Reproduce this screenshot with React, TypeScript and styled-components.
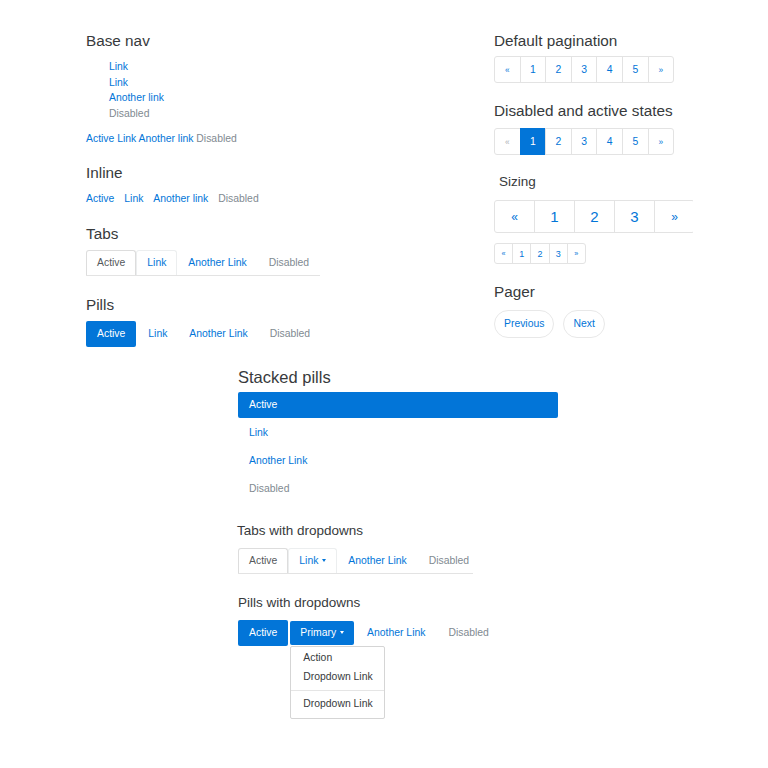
import React from 'react';
import styled, { createGlobalStyle } from 'styled-components';

const BLUE = '#0275d8';
const TEXT = '#373a3c';
const MUTED = '#818a91';
const LINE = '#e3e3e3';

const GlobalStyle = createGlobalStyle`
  html, body {
    margin: 0;
    padding: 0;
    background: #fff;
    font-family: 'Liberation Sans', Arial, sans-serif;
    color: ${TEXT};
  }
  * { box-sizing: border-box; }
`;

type Tone = 'link' | 'muted' | 'dark';

const toneColor = (t?: Tone) => (t === 'muted' ? MUTED : t === 'dark' ? '#55595c' : BLUE);

function App() {
  return (
    <>
      <GlobalStyle />
      <Styled.Page>
        <Styled.TopGrid>
          <Styled.Column>
            <Styled.Title>Base nav</Styled.Title>
            <Styled.BaseList>
              <Styled.Item>Link</Styled.Item>
              <Styled.Item>Link</Styled.Item>
              <Styled.Item>Another link</Styled.Item>
              <Styled.Item $tone="muted">Disabled</Styled.Item>
            </Styled.BaseList>
            <Styled.PlainNav>
              <Styled.Item>Active</Styled.Item> <Styled.Item>Link</Styled.Item>{' '}
              <Styled.Item>Another link</Styled.Item> <Styled.Item $tone="muted">Disabled</Styled.Item>
            </Styled.PlainNav>

            <Styled.Title $top={17} $bottom={9}>
              Inline
            </Styled.Title>
            <Styled.InlineNav>
              <Styled.Item>Active</Styled.Item>
              <Styled.Item>Link</Styled.Item>
              <Styled.Item>Another link</Styled.Item>
              <Styled.Item $tone="muted">Disabled</Styled.Item>
            </Styled.InlineNav>

            <Styled.Title $top={18} $bottom={7}>
              Tabs
            </Styled.Title>
            <Styled.Tabs>
              <Styled.Tab $state="active">Active</Styled.Tab>
              <Styled.Tab $state="hover">Link</Styled.Tab>
              <Styled.Tab>Another Link</Styled.Tab>
              <Styled.Tab $state="disabled">Disabled</Styled.Tab>
            </Styled.Tabs>

            <Styled.Title $top={20} $bottom={7}>
              Pills
            </Styled.Title>
            <Styled.Pills>
              <Styled.Pill $active $pad={11}>Active</Styled.Pill>
              <Styled.Pill>Link</Styled.Pill>
              <Styled.Pill>Another Link</Styled.Pill>
              <Styled.Pill $tone="muted">Disabled</Styled.Pill>
            </Styled.Pills>
          </Styled.Column>

          <Styled.Column $clip>
            <Styled.Title $bottom={6}>Default pagination</Styled.Title>
            <Styled.Pagination>
              {['«', '1', '2', '3', '4', '5', '»'].map((p) => (
                <Styled.PageCell key={p} $small={p === '«' || p === '»'}>
                  {p}
                </Styled.PageCell>
              ))}
            </Styled.Pagination>

            <Styled.Title $top={19} $bottom={8}>
              Disabled and active states
            </Styled.Title>
            <Styled.Pagination>
              {['«', '1', '2', '3', '4', '5', '»'].map((p, i) => (
                <Styled.PageCell
                  key={p}
                  $small={p === '«' || p === '»'}
                  $active={i === 1}
                  $disabled={i === 0}
                >
                  {p}
                </Styled.PageCell>
              ))}
            </Styled.Pagination>

            <Styled.Title $size={13.5} $top={19} $bottom={10} $indent={5}>
              Sizing
            </Styled.Title>
            <Styled.Pagination $size="lg">
              {['«', '1', '2', '3', '»'].map((p) => (
                <Styled.PageCell key={p} $size="lg" $small={p === '«' || p === '»'}>
                  {p}
                </Styled.PageCell>
              ))}
            </Styled.Pagination>
            <Styled.Pagination $size="sm" $top={10}>
              {['«', '1', '2', '3', '»'].map((p) => (
                <Styled.PageCell key={p} $size="sm" $small={p === '«' || p === '»'}>
                  {p}
                </Styled.PageCell>
              ))}
            </Styled.Pagination>

            <Styled.Title $top={19} $bottom={9}>
              Pager
            </Styled.Title>
            <Styled.Pager>
              <Styled.PagerButton>Previous</Styled.PagerButton>
              <Styled.PagerButton>Next</Styled.PagerButton>
            </Styled.Pager>
          </Styled.Column>
        </Styled.TopGrid>

        <Styled.Middle>
          <Styled.Title $size={16.5} $line={20} $bottom={5}>
            Stacked pills
          </Styled.Title>
          <Styled.Stacked>
            <Styled.StackedPill $active>Active</Styled.StackedPill>
            <Styled.StackedPill>Link</Styled.StackedPill>
            <Styled.StackedPill>Another Link</Styled.StackedPill>
            <Styled.StackedPill $tone="muted">Disabled</Styled.StackedPill>
          </Styled.Stacked>

          <Styled.Title $size={13.5} $top={21} $bottom={9} $indent={-1}>
            Tabs with dropdowns
          </Styled.Title>
          <Styled.Tabs $width={235}>
            <Styled.Tab $state="active">Active</Styled.Tab>
            <Styled.Tab $state="hover">
              Link <Styled.Caret />
            </Styled.Tab>
            <Styled.Tab>Another Link</Styled.Tab>
            <Styled.Tab $state="disabled">Disabled</Styled.Tab>
          </Styled.Tabs>

          <Styled.Title $size={13.5} $top={21} $bottom={9}>
            Pills with dropdowns
          </Styled.Title>
          <Styled.Pills>
            <Styled.Pill $active $pad={11}>Active</Styled.Pill>
            <Styled.DropdownWrap>
              <Styled.Pill $active $inset>
                Primary <Styled.Caret $light />
              </Styled.Pill>
              <Styled.Menu>
                <Styled.MenuItem>Action</Styled.MenuItem>
                <Styled.MenuItem>Dropdown Link</Styled.MenuItem>
                <Styled.Divider />
                <Styled.MenuItem>Dropdown Link</Styled.MenuItem>
              </Styled.Menu>
            </Styled.DropdownWrap>
            <Styled.Pill $pad={11}>Another Link</Styled.Pill>
            <Styled.Pill $tone="muted">Disabled</Styled.Pill>
          </Styled.Pills>
        </Styled.Middle>
      </Styled.Page>
    </>
  );
}
export default App;

const Styled = {
  Page: styled.div`
    width: 768px;
    min-height: 768px;
    padding-top: 32px;
    font-size: 10.4px;
  `,
  TopGrid: styled.div`
    display: grid;
    grid-template-columns: 408px 199px;
    padding-left: 86px;
    align-items: start;
  `,
  Column: styled.div<{ $clip?: boolean }>`
    display: flex;
    flex-direction: column;
    align-items: flex-start;
    overflow: ${(p) => (p.$clip ? 'hidden' : 'visible')};
  `,
  Middle: styled.div`
    width: 320px;
    margin: 20px 0 0 238px;
    display: flex;
    flex-direction: column;
    align-items: flex-start;
  `,
  Title: styled.h4<{ $size?: number; $line?: number; $top?: number; $bottom?: number; $indent?: number }>`
    margin: ${(p) => p.$top ?? 0}px 0 ${(p) => p.$bottom ?? 8}px ${(p) => p.$indent ?? 0}px;
    font-size: ${(p) => p.$size ?? 15.3}px;
    line-height: ${(p) => p.$line ?? (p.$size && p.$size < 15 ? 16 : 18)}px;
    font-weight: 400;
    color: ${TEXT};
    white-space: nowrap;
  `,
  Item: styled.span<{ $tone?: Tone }>`
    color: ${(p) => toneColor(p.$tone)};
    white-space: nowrap;
  `,
  BaseList: styled.div`
    display: flex;
    flex-direction: column;
    padding: 1px 0 0 23px;
    line-height: 15.7px;
  `,
  PlainNav: styled.div`
    margin-top: 9px;
    line-height: 16px;
    white-space: nowrap;
  `,
  InlineNav: styled.div`
    display: flex;
    gap: 10px;
    line-height: 16px;
  `,
  Tabs: styled.div<{ $width?: number }>`
    display: flex;
    width: ${(p) => (p.$width ? `${p.$width}px` : 'auto')};
    overflow: hidden;
    border-bottom: 1px solid ${LINE};
  `,
  Tab: styled.div<{ $state?: 'active' | 'hover' | 'disabled' }>`
    flex: none;
    display: flex;
    align-items: center;
    gap: 3px;
    height: 26px;
    margin-bottom: -1px;
    padding: 0 10px;
    border: 1px solid transparent;
    border-radius: 3px 3px 0 0;
    white-space: nowrap;
    color: ${(p) => (p.$state === 'active' ? '#55595c' : p.$state === 'disabled' ? MUTED : BLUE)};
    background: #fff;
    ${(p) => p.$state === 'active' && `border-color: #ddd #ddd #fff;`}
    ${(p) => p.$state === 'hover' && `border-color: #eceeef #eceeef ${LINE};`}
  `,
  Pills: styled.div`
    display: flex;
    gap: 2px;
  `,
  Pill: styled.div<{ $active?: boolean; $tone?: Tone; $inset?: boolean; $pad?: number }>`
    display: flex;
    align-items: center;
    gap: 3px;
    height: ${(p) => (p.$inset ? 24 : 26)}px;
    margin-top: ${(p) => (p.$inset ? 1 : 0)}px;
    padding: 0 ${(p) => p.$pad ?? 10}px;
    border-radius: 2px;
    white-space: nowrap;
    color: ${(p) => (p.$active ? '#fff' : toneColor(p.$tone))};
    background: ${(p) => (p.$active ? BLUE : 'transparent')};
  `,
  Caret: styled.span<{ $light?: boolean }>`
    display: inline-block;
    width: 0;
    height: 0;
    margin-left: 1px;
    border-top: 3px solid ${(p) => (p.$light ? '#fff' : BLUE)};
    border-left: 2.5px solid transparent;
    border-right: 2.5px solid transparent;
  `,
  DropdownWrap: styled.div`
    position: relative;
  `,
  Menu: styled.div`
    position: absolute;
    left: 0;
    top: 26px;
    width: 95px;
    padding: 1px 0 5px;
    background: #fff;
    border: 1px solid #d5d5d5;
    border-radius: 2px;
    z-index: 2;
  `,
  MenuItem: styled.div`
    padding: 0 12px;
    line-height: 19px;
    color: ${TEXT};
    white-space: nowrap;
  `,
  Divider: styled.div`
    height: 1px;
    margin: 4px 0 3px;
    background: #e5e5e5;
  `,
  Stacked: styled.div`
    display: flex;
    flex-direction: column;
    gap: 2px;
    width: 100%;
  `,
  StackedPill: styled.div<{ $active?: boolean; $tone?: Tone }>`
    height: 26px;
    line-height: 26px;
    padding-left: 11px;
    border-radius: 2px;
    color: ${(p) => (p.$active ? '#fff' : toneColor(p.$tone))};
    background: ${(p) => (p.$active ? BLUE : 'transparent')};
  `,
  Pagination: styled.div<{ $size?: 'lg' | 'sm'; $top?: number }>`
    display: flex;
    margin-top: ${(p) => p.$top ?? 0}px;
    border-radius: 3px;
  `,
  PageCell: styled.div<{ $size?: 'lg' | 'sm'; $small?: boolean; $active?: boolean; $disabled?: boolean }>`
    flex: none;
    display: flex;
    align-items: center;
    justify-content: center;
    width: ${(p) => (p.$size === 'lg' ? 41 : p.$size === 'sm' ? 19.2 : 26.6)}px;
    height: ${(p) => (p.$size === 'lg' ? 33 : p.$size === 'sm' ? 21 : 27)}px;
    margin-right: -1px;
    border: 1px solid ${LINE};
    font-size: ${(p) => {
      const base = p.$size === 'lg' ? 15 : p.$size === 'sm' ? 9 : 10.4;
      return p.$small ? base * 0.8 : base;
    }}px;
    color: ${(p) => (p.$active ? '#fff' : p.$disabled ? '#aab0b5' : BLUE)};
    background: ${(p) => (p.$active ? BLUE : '#fff')};
    border-color: ${(p) => (p.$active ? BLUE : LINE)};
    &:first-child {
      border-radius: 3px 0 0 3px;
    }
    &:last-child {
      border-radius: 0 3px 3px 0;
    }
  `,
  Pager: styled.div`
    display: flex;
    gap: 9px;
  `,
  PagerButton: styled.div`
    height: 28px;
    line-height: 26px;
    padding: 0 9px;
    border: 1px solid #e8e8e8;
    border-radius: 14px;
    color: ${BLUE};
    white-space: nowrap;
  `,
};
